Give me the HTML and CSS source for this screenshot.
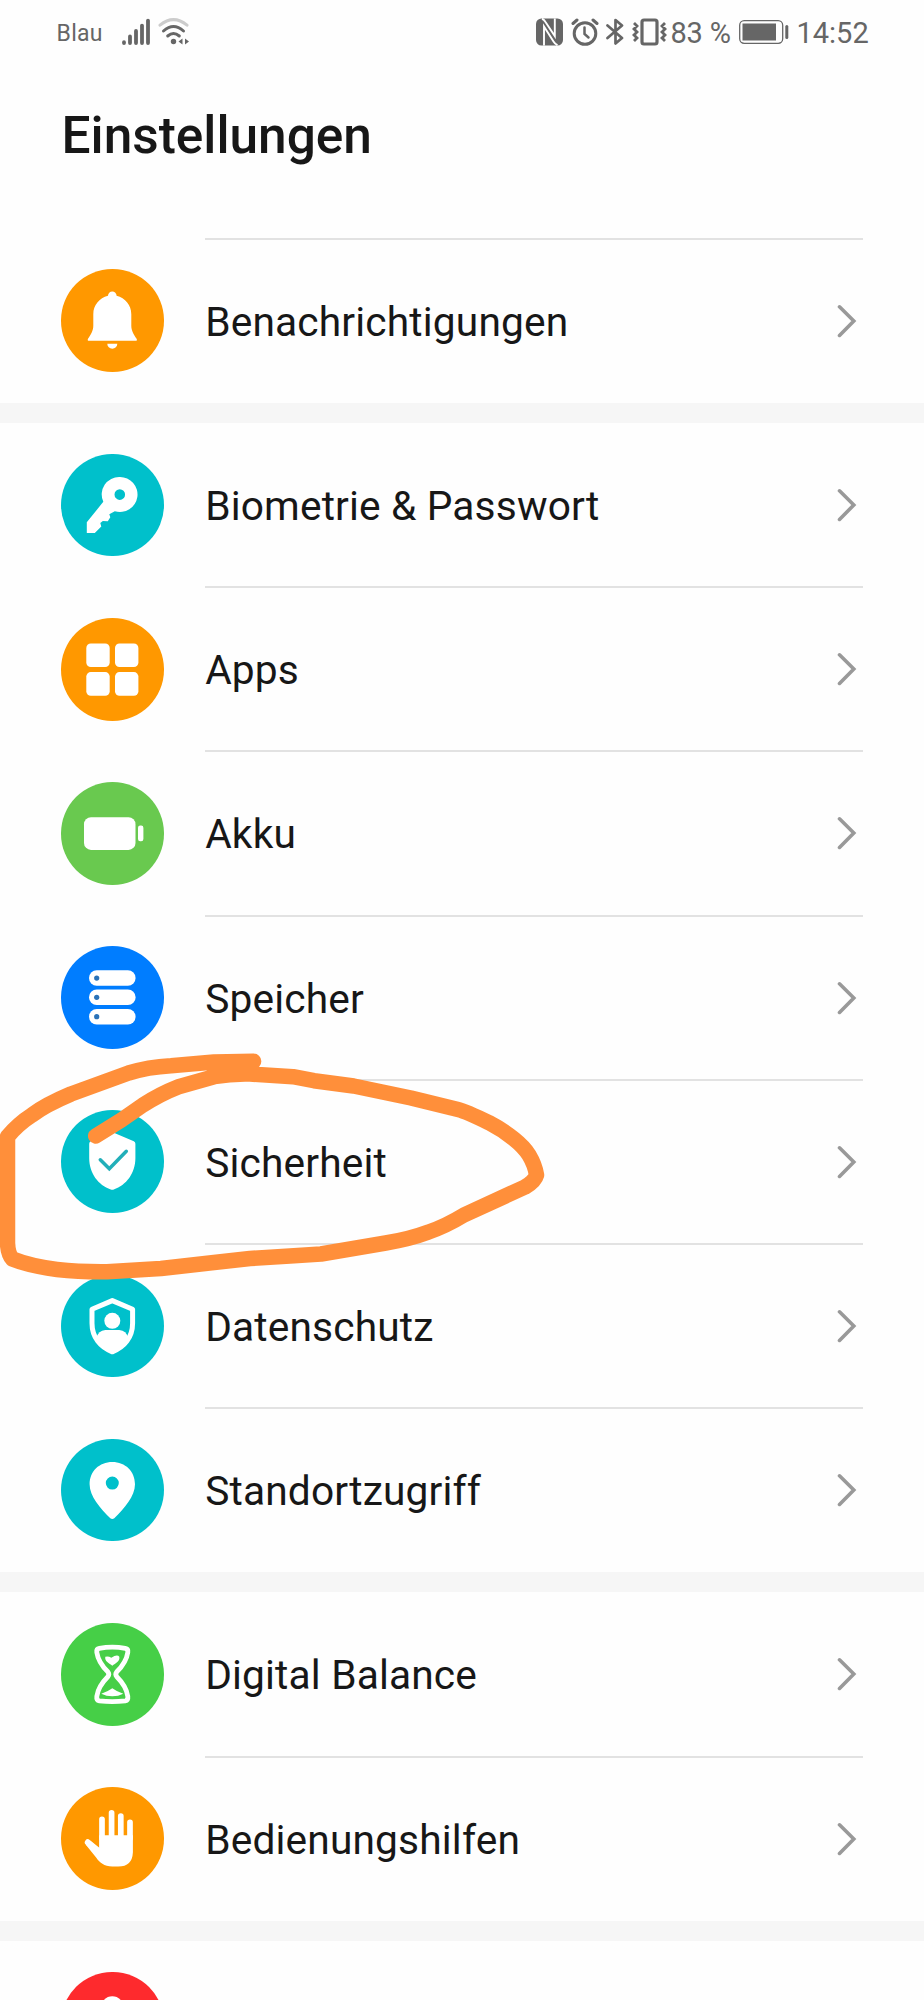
FILE: index.html
```html
<!DOCTYPE html>
<html lang="de">
<head>
<meta charset="utf-8">
<title>Einstellungen</title>
<link rel="stylesheet" href="styles.css">
</head>
<body>
<svg class="defs" aria-hidden="true">
  <symbol id="chevron" viewBox="0 0 20 34"><path d="M2.5 2.8 16.8 17 2.5 31.4" fill="none" stroke="#999" stroke-width="3.6" stroke-linecap="round" stroke-linejoin="miter"/></symbol>
</svg>
<div class="screen">
  <header class="status">
    <span class="carrier">Blau</span>
    <svg class="signal" width="28" height="28" viewBox="0 0 28 28"><g stroke="#666" stroke-width="3.8" stroke-linecap="round"><path d="M2 24.200v.8M8 18.400v6.600M14 13v12M20 7.600v17.400M26 2.600v22.400"/></g></svg>
    <svg class="wifi" width="32" height="28" viewBox="0 0 32 28"><g fill="none" stroke-width="3" stroke-linecap="round"><path d="M2 7.200Q15.500-4 29 7.200" stroke="#ccc"/><path d="M5.500 13Q15.500 4 25.500 13" stroke="#666"/><path d="M9.700 18Q15.500 13 21.300 18" stroke="#666"/></g><circle cx="15.500" cy="23.500" r="2.700" fill="#666"/><path d="M24.500 20.500v6l-4-3zM27 20.500v6l4-3z" fill="#666"/></svg>
    <div class="status-right">
      <svg width="27" height="28" viewBox="0 0 27 28"><rect y=".5" width="27" height="27" rx="5.500" fill="#666"/><g fill="none" stroke="#fff" stroke-width="1.900"><path d="M6 .8Q8 1.500 9.500 4L18.800 18V.5"/><path d="M8 27.500V8.500L17.500 23.500Q19 26 21.500 27.200"/></g></svg>
      <svg class="alarm" width="28" height="28" viewBox="0 0 28 28"><g fill="none" stroke="#666" stroke-linecap="round"><circle cx="14" cy="15.500" r="10.800" stroke-width="3"/><path d="M13.500 9.500V16l4 3.500" stroke-width="2.500"/><path d="M2 5.500 6 2M22 2l4 3.500" stroke-width="3"/></g></svg>
      <svg class="bluetooth" width="18" height="28" viewBox="0 0 18 28"><path d="M1.500 7.500 16 20 9.500 25.500V2L16 7.500 1.500 20" fill="none" stroke="#666" stroke-width="2.700" stroke-linecap="round" stroke-linejoin="round"/></svg>
      <svg class="vibrate" width="36" height="28" viewBox="0 0 36 28"><g fill="none" stroke="#666" stroke-width="3.200"><rect x="10" y="2" width="15" height="24" rx="2"/><path d="M2 5l3 3-3 3 3 3-3 3 3 3-3 3M33 5l-3 3 3 3-3 3 3 3-3 3 3 3" stroke-width="2.800"/></g></svg>
      <span class="percent">83 %</span>
      <svg class="power" width="50" height="24" viewBox="0 0 50 24"><rect x=".7" y=".7" width="43" height="22.600" rx="4.500" fill="none" stroke="#666" stroke-width="1.300"/><rect x="3.500" y="3.500" width="33.500" height="17" fill="#666"/><path d="M47.800 6.500v11" stroke="#666" stroke-width="3" stroke-linecap="round"/></svg>
      <span class="time">14:52</span>
    </div>
  </header>
  <h1 class="title">Einstellungen</h1>

  <main class="list">
    <section class="group">
      <div class="row">
        <svg class="icon orange" viewBox="-51.3 -51.3 102.6 102.6"><path fill="#fff" d="M-4.300-24.500a4.300 4.300 0 0 1 8.600 0C13-22 19-15.500 19-6V5.500C19 11 22 15 24.300 18.500q1 2-1 2H-23.300q-2 0-1-2C-22 15-19 11-19 5.500V-6C-19-15.500-13-22-4.300-24.500zM-5 23.500H5a5 5 0 0 1-10 0z"/></svg>
        <div class="line"><span class="label">Benachrichtigungen</span><svg class="chevron"><use href="#chevron"/></svg></div>
      </div>
    </section>

    <section class="group">
      <div class="row">
        <svg class="icon teal" viewBox="-51.3 -51.3 102.6 102.6"><path fill="#fff" fill-rule="evenodd" d="M7.500-28.300a17.500 17.500 0 1 1-5 34.200L-3 9l1 3-2.500 4-5-.3-2.500 2 1 3.500-6.500 6.600h-8V17L-9-3.500A17.500 17.500 0 0 1 7.500-28.300zm0 12.300a5.300 5.300 0 1 0 0 10.600 5.300 5.300 0 0 0 0-10.600z"/></svg>
        <div class="line"><span class="label">Biometrie &amp; Passwort</span><svg class="chevron"><use href="#chevron"/></svg></div>
      </div>
      <div class="row">
        <svg class="icon orange" viewBox="-51.3 -51.3 102.6 102.6"><g fill="#fff"><rect x="-26" y="-25.800" width="23.400" height="23.600" rx="4.500"/><rect x="2.700" y="-25.800" width="23.400" height="23.600" rx="4.500"/><rect x="-26" y="2.800" width="23.400" height="23.600" rx="4.500"/><rect x="2.700" y="2.800" width="23.400" height="23.600" rx="4.500"/></g></svg>
        <div class="line"><span class="label">Apps</span><svg class="chevron"><use href="#chevron"/></svg></div>
      </div>
      <div class="row">
        <svg class="icon leaf" viewBox="-51.3 -51.3 102.6 102.6"><g fill="#fff"><rect x="-28.300" y="-16" width="51.500" height="32.600" rx="7"/><rect x="25.700" y="-7.700" width="5.400" height="15.700" rx="2.200"/></g></svg>
        <div class="line"><span class="label">Akku</span><svg class="chevron"><use href="#chevron"/></svg></div>
      </div>
      <div class="row">
        <svg class="icon blue" viewBox="-51.3 -51.3 102.6 102.6"><g fill="#fff"><rect x="-23.300" y="-27" width="46.600" height="15.500" rx="7.700"/><rect x="-23.300" y="-7.700" width="46.600" height="15.500" rx="7.700"/><rect x="-23.300" y="11.700" width="46.600" height="15.500" rx="7.700"/></g><g fill="#2a72b8"><circle cx="-15.600" cy="-19.200" r="2.600"/><circle cx="-15.600" cy="0" r="2.600"/><circle cx="-15.600" cy="19.400" r="2.600"/></g></svg>
        <div class="line"><span class="label">Speicher</span><svg class="chevron"><use href="#chevron"/></svg></div>
      </div>
      <div class="row">
        <svg class="icon teal" viewBox="-51.3 -51.3 102.6 102.6"><path fill="#fff" d="M-1.500-28.500q1.500-.8 3 0L21.500-20q1.600.8 1.600 2.500V-3C23 12 14 24 1.500 28.200q-1.500.5-3 0C-14 24-23 12-23.100-3v-14.500q0-1.700 1.600-2.500z"/><path d="M-12-1.500-3 7.500 14-10" fill="none" stroke="#22afb9" stroke-width="3.500" stroke-linecap="round"/></svg>
        <div class="line"><span class="label">Sicherheit</span><svg class="chevron"><use href="#chevron"/></svg></div>
      </div>
      <div class="row">
        <svg class="icon teal" viewBox="-51.3 -51.3 102.6 102.6"><path fill="none" stroke="#fff" stroke-width="5" stroke-linejoin="round" d="M0-25.700 20.300-17V-3C20.300 11 12 21 0 25.500-12 21-20.300 11-20.300-3v-14z"/><circle cy="-5.500" r="8" fill="#fff"/><path fill="#fff" d="M-16 12q2-8 9-8.300H7q7 .3 9 8.300L9 22 0 26.500-9 22z"/></svg>
        <div class="line"><span class="label">Datenschutz</span><svg class="chevron"><use href="#chevron"/></svg></div>
      </div>
      <div class="row">
        <svg class="icon teal" viewBox="-51.3 -51.3 102.6 102.6"><path fill="#fff" fill-rule="evenodd" d="M0-28.300C13-28.300 22.700-19 22.700-6 22.700 6 12 18 2 28q-2 1.500-4 0C-12 18-22.700 6-22.700-6-22.700-19-13-28.300 0-28.300zm0 14.600a6.500 6.500 0 1 0 0 13 6.500 6.500 0 0 0 0-13z"/></svg>
        <div class="line"><span class="label">Standortzugriff</span><svg class="chevron"><use href="#chevron"/></svg></div>
      </div>
    </section>

    <section class="group">
      <div class="row">
        <svg class="icon green" viewBox="-51.3 -51.3 102.6 102.6"><path fill="none" stroke="#fff" stroke-width="4.800" stroke-linejoin="round" d="M-13-26Q0-28.200 13-26 16-25.500 15.500-22 14-12 4.500-2.500 2.500 0 4.500 2.500 14 12 15.500 22 16 26 13 26.500 0 28-13 26.500-16 26-15.500 22-14 12-4.500 2.500-2.500 0-4.500-2.500-14-12-15.500-22-16-25.500-13-26z"/><path fill="#fff" d="M-1-16.500Q5-20.500 7-17.500C8-13 3-11 0-8.500-3-11-8-13-7-17.500Q-4-18.500-1-16.500zM-11 19.500Q-4 17 0 14 4 17 11 19.500 6 22 0 22T-11 19.500z"/></svg>
        <div class="line"><span class="label">Digital Balance</span><svg class="chevron"><use href="#chevron"/></svg></div>
      </div>
      <div class="row">
        <svg class="icon orange" viewBox="-51.3 -51.3 102.6 102.6"><g stroke="#fff" stroke-width="5.700" stroke-linecap="round"><path d="M-10.300-19V0M-.7-25.500V0M8.500-22.300V0M17.700-16V0"/><path d="M-24.500 4-12 14" stroke-width="6"/></g><path fill="#fff" d="M-13.200-3H20.600V14Q20 28.300 6 28.300H0C-8 28.300-13 24-16 19.500L-26.500 6.500-22 2.500-13.200 10.500z"/></svg>
        <div class="line"><span class="label">Bedienungshilfen</span><svg class="chevron"><use href="#chevron"/></svg></div>
      </div>
    </section>

    <section class="group">
      <div class="row">
        <svg class="icon red" viewBox="-51.3 -51.3 102.6 102.6"><circle cy="-15.500" r="11.500" fill="#fff"/></svg>
      </div>
    </section>
  </main>

  <svg class="scribble" width="924" height="2000" viewBox="0 0 924 2000" aria-hidden="true"><path d="M95.700 1136 121.400 1120 143 1105Q160 1094 178.600 1086.700L214 1076.700Q232 1073.500 250 1074L293 1076.700 314 1080.700 353.600 1086 411 1098 458 1109.500Q466 1111.500 489 1122.700 503 1130 514 1139 524 1147 529 1155 535 1165 536.500 1175 535 1181 525 1187L464 1215Q446 1226 428.600 1232 410 1239 385.700 1243L321 1254 290 1256 250 1258.500 214 1262.500 161 1268.500 107 1271.700Q80 1272 57 1269.500 30 1266 12.500 1259 8 1254 7.500 1243V1136.700Q18 1124 32 1115 45 1105 71 1094L128.600 1073Q148 1067 171 1065.700L214 1062 253.600 1061.300"/></svg>
</div>
</body>
</html>
```

FILE: styles.css
```css
* { box-sizing: border-box; }

body {
  margin: 0;
  background: #fefefe;
  color: #171717;
  font-family: Roboto, "Liberation Sans", sans-serif;
}

.defs { position: absolute; width: 0; height: 0; }

.screen {
  position: relative;
  width: 924px;
  height: 2000px;
  overflow: hidden;
}

.status {
  display: flex;
  align-items: center;
  height: 64px;
  padding: 0 56.5px 0 56.5px;
  color: #666;
}

.status svg { display: block; flex: none; }

.carrier { width: 65px; font-size: 23px; letter-spacing: .3px; padding-top: 2px; }
.wifi { margin-left: 8px; }

.status-right {
  display: flex;
  align-items: center;
  margin-left: auto;
}

.alarm { margin-left: 8px; }
.bluetooth { margin-left: 7px; }
.vibrate { margin-left: 8px; }
.percent, .time { font-size: 29px; line-height: 34px; padding-top: 2px; white-space: nowrap; }
.percent { width: 71px; padding-left: 3px; letter-spacing: -.2px; }
.time { width: 71px; margin-left: 8px; }

.title {
  margin: 0;
  height: 174.7px;
  padding: 42px 0 0 61.5px;
  font-size: 51.4px;
  font-weight: 500;
  line-height: 60px;
}

.list {
  display: flex;
  flex-direction: column;
  gap: 20.3px;
  background: #f6f6f6;
}

.group { background: #fefefe; }

.row {
  display: flex;
  align-items: center;
  height: 164.15px;
  padding: 0 61.5px 0 61.2px;
}

.icon {
  flex: none;
  width: 102.6px;
  height: 102.6px;
  border-radius: 50%;
}

.orange { background: #ff9800; }
.teal { background: #00c0cb; }
.leaf { background: #69c94f; }
.blue { background: #007dff; }
.green { background: #46cf47; }
.red { background: #fe2a2d; }

.line {
  display: flex;
  flex: 1;
  align-items: center;
  justify-content: space-between;
  height: 100%;
  margin: -2px 0 0 41.4px;
  padding-right: 6px;
  border-top: 2px solid #e2e2e2;
}

.group:first-child .line,
.row + .row .line { border-top-color: #e2e2e2; }
.group:not(:first-child) .row:first-child .line { border-top-color: transparent; }

.label {
  padding-top: 2px;
  font-size: 40.7px;
  line-height: 48px;
  letter-spacing: .15px;
  white-space: nowrap;
}

.chevron { width: 20px; height: 34px; }

.scribble {
  position: absolute;
  top: 0;
  left: 0;
  fill: none;
  stroke: #ff8f3a;
  stroke-width: 15.5px;
  stroke-linecap: round;
  stroke-linejoin: round;
  pointer-events: none;
}
```
